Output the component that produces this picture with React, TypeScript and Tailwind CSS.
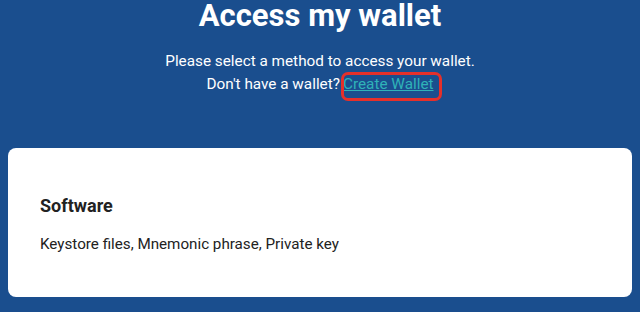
import React from "react";

export default function App() {
  return (
    <div className="w-[640px] h-[312px] overflow-hidden bg-[#1a4e8e] font-['Roboto',sans-serif]">
      {/* Header */}
      <div className="flex flex-col items-center text-white">
        <h1 className="text-[31px] leading-[32px] font-bold">Access my wallet</h1>
        <p className="mt-[18px] text-[15.3px] leading-[23px] text-center">
          Please select a method to access your wallet.
          <br />
          Don't have a wallet?
          <a href="#" className="relative inline-block ml-[3px] text-[#2fb3b8] underline">
            Create Wallet
            <span className="absolute -left-[2px] -right-[8px] -top-[1px] -bottom-[5px] rounded-[7px] border-[3px] border-[#e5302a]" />
          </a>
        </p>
      </div>

      {/* Method card */}
      <div className="mx-2 mt-[52px] h-[149px] rounded-lg bg-white px-8 pt-[46px] text-[#222]">
        <h2 className="text-[18px] leading-6 font-bold">Software</h2>
        <p className="mt-[14px] text-[15.2px] leading-6">Keystore files, Mnemonic phrase, Private key</p>
      </div>
    </div>
  );
}
